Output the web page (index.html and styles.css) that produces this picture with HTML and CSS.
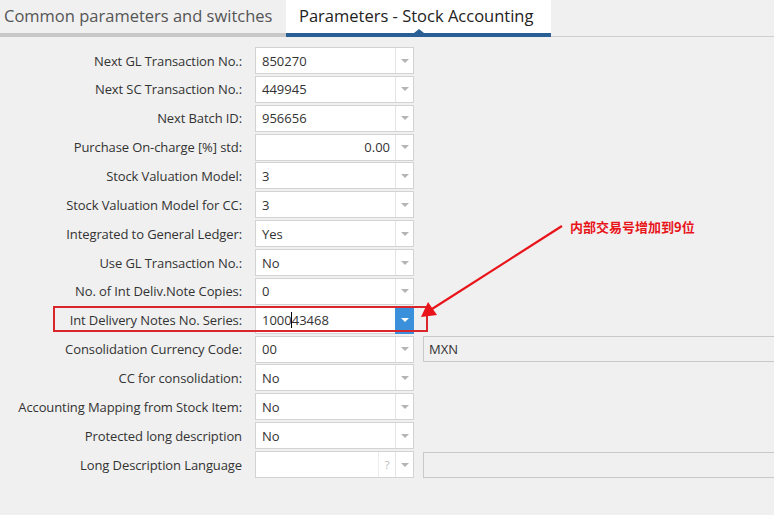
FILE: index.html
```html
<!DOCTYPE html>
<html>
<head>
<meta charset="utf-8">
<link rel="stylesheet" href="styles.css">
</head>
<body>
<div class="page">
  <div class="tabs">
    <div class="tab">Common parameters and switches</div>
    <div class="tab active">Parameters - Stock Accounting</div>
    <div class="tab-rest"></div>
  </div>
  <div class="form">
    <div class="row"><div class="label">Next GL Transaction No.:</div><div class="field"><div class="value">850270</div><div class="drop"><span class="tri"></span></div></div></div>
    <div class="row"><div class="label">Next SC Transaction No.:</div><div class="field"><div class="value">449945</div><div class="drop"><span class="tri"></span></div></div></div>
    <div class="row"><div class="label">Next Batch ID:</div><div class="field"><div class="value">956656</div><div class="drop"><span class="tri"></span></div></div></div>
    <div class="row"><div class="label">Purchase On-charge [%] std:</div><div class="field"><div class="value num">0.00</div><div class="drop"><span class="tri"></span></div></div></div>
    <div class="row"><div class="label">Stock Valuation Model:</div><div class="field"><div class="value">3</div><div class="drop"><span class="tri"></span></div></div></div>
    <div class="row"><div class="label">Stock Valuation Model for CC:</div><div class="field"><div class="value">3</div><div class="drop"><span class="tri"></span></div></div></div>
    <div class="row"><div class="label">Integrated to General Ledger:</div><div class="field"><div class="value">Yes</div><div class="drop"><span class="tri"></span></div></div></div>
    <div class="row"><div class="label">Use GL Transaction No.:</div><div class="field"><div class="value">No</div><div class="drop"><span class="tri"></span></div></div></div>
    <div class="row"><div class="label">No. of Int Deliv.Note Copies:</div><div class="field"><div class="value">0</div><div class="drop"><span class="tri"></span></div></div></div>
    <div class="row marked"><div class="label">Int Delivery Notes No. Series:</div><div class="field focus"><div class="value">1000<span class="caret"></span>43468</div><div class="drop blue"><span class="tri white"></span></div></div></div>
    <div class="row"><div class="label">Consolidation Currency Code:</div><div class="field"><div class="value">00</div><div class="drop"><span class="tri"></span></div></div><div class="extra">MXN</div></div>
    <div class="row"><div class="label">CC for consolidation:</div><div class="field"><div class="value">No</div><div class="drop"><span class="tri"></span></div></div></div>
    <div class="row"><div class="label">Accounting Mapping from Stock Item:</div><div class="field"><div class="value">No</div><div class="drop"><span class="tri"></span></div></div></div>
    <div class="row"><div class="label">Protected long description</div><div class="field"><div class="value">No</div><div class="drop"><span class="tri"></span></div></div></div>
    <div class="row"><div class="label">Long Description Language</div><div class="field"><div class="value"></div><div class="help">?</div><div class="drop"><span class="tri"></span></div></div><div class="extra"></div></div>
  </div>
  <div class="note">内部交易号增加到9位</div>
  <svg class="arrow" width="774" height="515" viewBox="0 0 774 515">
    <line x1="562" y1="226" x2="432" y2="309" stroke="#e8141a" stroke-width="2.2"/>
    <polygon points="421,317 428,302 437,315" fill="#e8141a"/>
  </svg>
</div>
</body>
</html>
```
FILE: styles.css
```css
html, body {
  margin: 0;
  padding: 0;
  background: #f0f0f0;
}
.page {
  position: relative;
  width: 774px;
  height: 515px;
  overflow: hidden;
  font-family: "Open Sans", "Noto Sans", sans-serif;
  color: #333;
}
.tabs {
  display: flex;
  height: 37px;
}
.tab {
  box-sizing: border-box;
  height: 37px;
  padding: 4px 0 0 4px;
  width: 286px;
  font-size: 16.5px;
  color: #555;
  border-bottom: 4px solid #c8c8c8;
  white-space: nowrap;
}
.tab.active {
  position: relative;
  width: 265px;
  padding-left: 13px;
  background: #fff;
  color: #222;
  border-bottom-color: #2a5f96;
}
.tab.active::after {
  content: "";
  position: absolute;
  left: 128px;
  bottom: 0;
  border-left: 5px solid transparent;
  border-right: 5px solid transparent;
  border-bottom: 4px solid #2a5f96;
}
.tab-rest {
  flex: 1;
  border-bottom: 1px solid #cfcfcf;
  height: 37px;
  box-sizing: border-box;
}
.form {
  display: flex;
  flex-direction: column;
  gap: 1.86px;
  padding-top: 10px;
}
.row {
  display: flex;
  align-items: center;
  height: 27px;
  font-size: 13px;
}
.label {
  width: 242px;
  text-align: right;
  margin-right: 13px;
  white-space: nowrap;
  letter-spacing: -0.1px;
}
.field {
  box-sizing: border-box;
  width: 159px;
  height: 27px;
  background: #fff;
  border: 1px solid #d3d3d3;
  display: flex;
  align-items: stretch;
}
.value {
  flex: 1;
  padding-left: 6px;
  display: flex;
  align-items: center;
  color: #333;
}
.value.num {
  justify-content: flex-end;
  padding-right: 5px;
}
.caret {
  display: inline-block;
  width: 1px;
  height: 16px;
  margin-left: -1px;
  background: #000;
}
.help {
  width: 16px;
  border-left: 1px solid #ececec;
  color: #b8b8b8;
  font-size: 11px;
  display: flex;
  align-items: center;
  justify-content: center;
}
.drop {
  width: 17px;
  border-left: 1px solid #e4e4e4;
  display: flex;
  align-items: center;
  justify-content: center;
}
.drop.blue {
  background: #3a90da;
  border-left-color: #3a90da;
  margin: -1px -1px -1px 0;
  width: 18px;
}
.tri {
  width: 0;
  height: 0;
  border-left: 4px solid transparent;
  border-right: 4px solid transparent;
  border-top: 4px solid #b4b4b4;
}
.tri.white {
  border-top-color: #fff;
}
.marked {
  position: relative;
}
.marked::before {
  content: "";
  position: absolute;
  left: 53px;
  top: -1px;
  height: 26px;
  border: 2px solid #d9262b;
  box-sizing: border-box;
  width: 375px;
}
.extra {
  box-sizing: border-box;
  flex: 1;
  margin-left: 9px;
  margin-right: -4px;
  height: 26px;
  border: 1px solid #c9c9c9;
  background: #f0f0f0;
  display: flex;
  align-items: center;
  padding-left: 5px;
}
.note {
  position: absolute;
  left: 570px;
  top: 217px;
  font-family: "Noto Sans CJK SC", sans-serif;
  font-weight: bold;
  font-size: 13px;
  color: #e8141a;
}
.arrow {
  position: absolute;
  left: 0;
  top: 0;
  pointer-events: none;
}
```
